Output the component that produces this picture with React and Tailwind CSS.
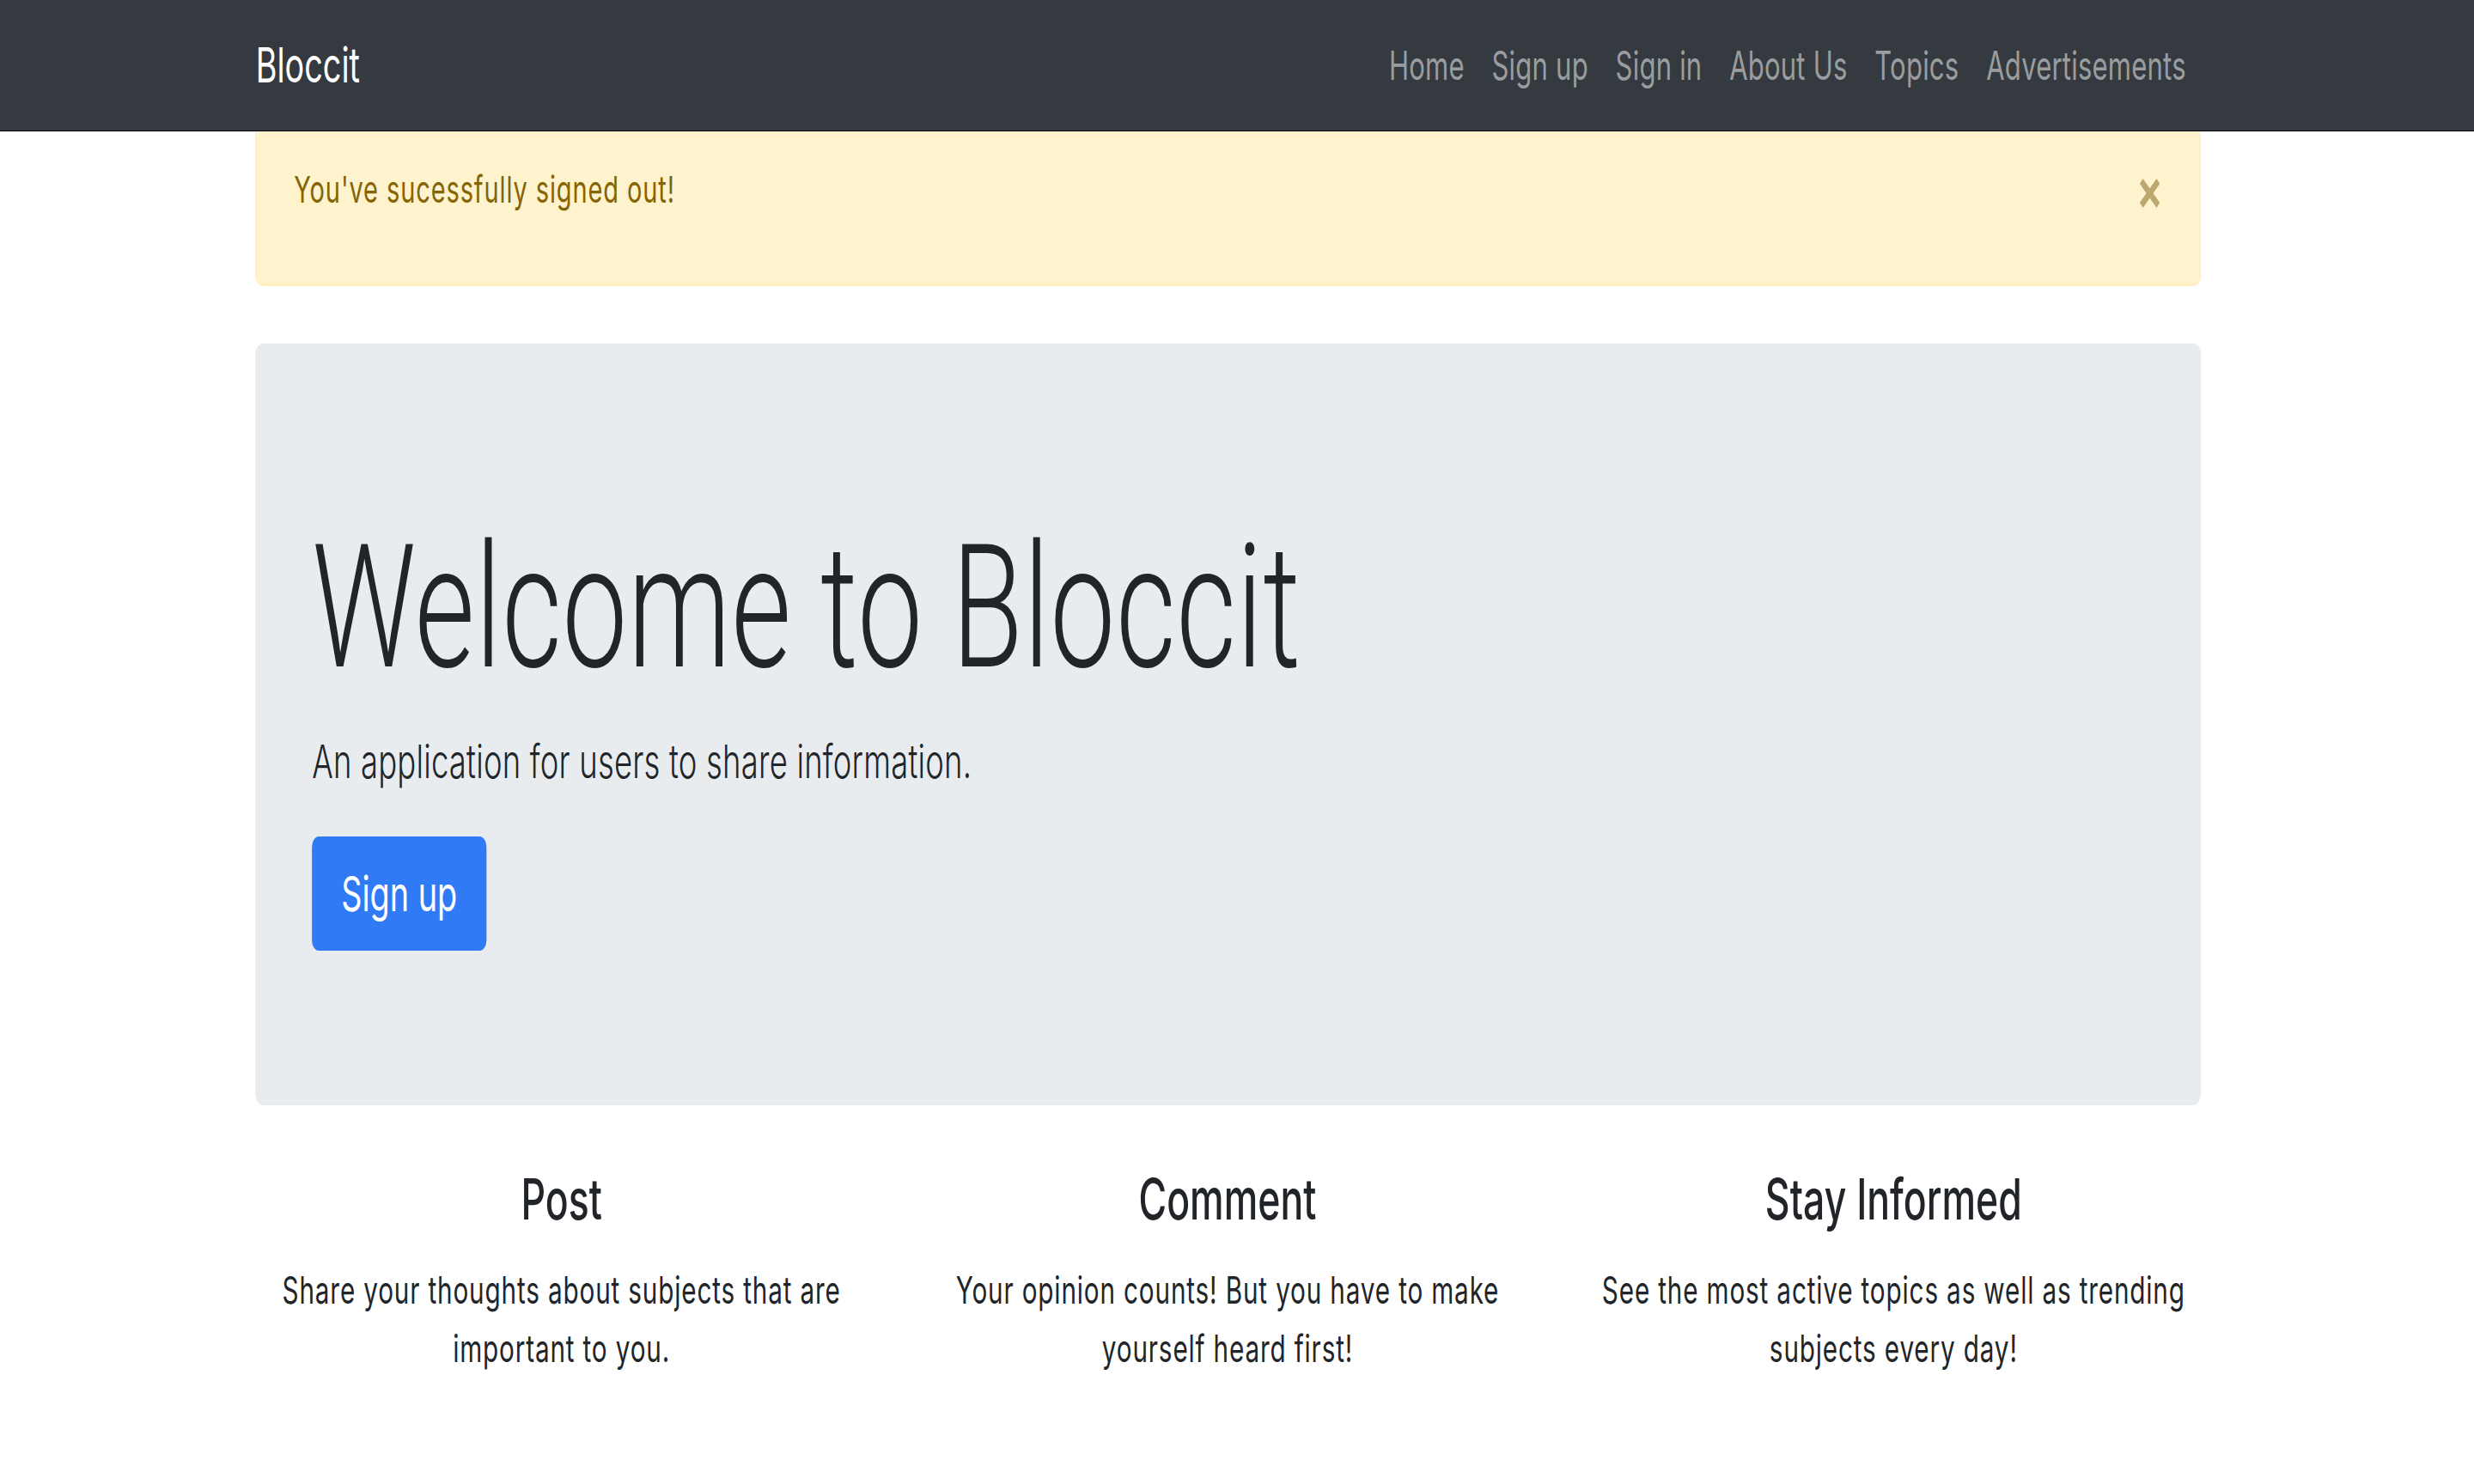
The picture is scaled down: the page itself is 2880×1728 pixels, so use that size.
const links = ["Home", "Sign up", "Sign in", "About Us", "Topics", "Advertisements"];

const features = [
  { title: "Post", lines: ["Share your thoughts about subjects that are", "important to you."] },
  { title: "Comment", lines: ["Your opinion counts! But you have to make", "yourself heard first!"] },
  { title: "Stay Informed", lines: ["See the most active topics as well as trending", "subjects every day!"] },
];

function Navbar() {
  return (
    <nav className="h-[153px] bg-[#343a40] border-b border-black">
      <div className="ml-[440px] w-[3356px] h-full flex items-center justify-between">
        <a className="ml-[1px] text-[56px] leading-none text-white">Bloccit</a>
        <ul className="flex items-center gap-[47px] pr-[26px]">
          {links.map((link) => (
            <li key={link} className="text-[46px] leading-none text-[#9a9d9f] tracking-[0.3px]">
              {link}
            </li>
          ))}
        </ul>
      </div>
    </nav>
  );
}

function Alert() {
  return (
    <div className="h-[180px] bg-[#fff3cd] border-2 border-t-0 border-[#ffeeba] rounded-b-[14px] flex justify-between pl-[65px] pr-[68px]">
      <p className="mt-[46px] text-[43px] leading-none tracking-[1.3px] text-[#856404]">You've sucessfully signed out!</p>
      <svg className="mt-[55px] w-[37px] h-[34px] text-[#bba86f]" viewBox="0 0 37 34" fill="none">
        <path d="M4 3 L33 31 M33 3 L4 31" stroke="currentColor" strokeWidth="8" />
      </svg>
    </div>
  );
}

function Jumbotron() {
  return (
    <div className="mt-[67px] h-[887px] bg-[#e9ecef] rounded-[14px] pl-[98px] pt-[208px] flex flex-col items-start">
      <h1 className="font-['Roboto',sans-serif] font-light text-[200px] leading-none tracking-[1px] text-[#212529]">
        Welcome to Bloccit
      </h1>
      <p className="mt-[52px] font-light text-[54px] leading-none tracking-[0.3px] text-[#212529]">
        An application for users to share information.
      </p>
      <a className="mt-[60px] w-[301px] h-[133px] rounded-[12px] bg-[#307af5] flex items-center justify-center text-[56px] leading-none text-white">
        Sign up
      </a>
    </div>
  );
}

function Features() {
  return (
    <div className="ml-[394px] w-[3446px] grid grid-cols-3 pt-[76px]">
      {features.map((f) => (
        <div key={f.title} className="px-[46px] text-center text-[#212529]">
          <h2 className="text-[66px] leading-none font-medium">{f.title}</h2>
          <p className="mt-[39px] text-[44px] leading-[68px] tracking-[1.25px]">
            {f.lines[0]}
            <br />
            {f.lines[1]}
          </p>
        </div>
      ))}
    </div>
  );
}

export default function App() {
  return (
    <div className="w-full min-h-screen overflow-hidden bg-white font-['Inter','Liberation_Sans',sans-serif]">
      <div className="w-[4267px] origin-top-left scale-x-[0.675]">
        <Navbar />
        <div className="ml-[440px] w-[3356px]">
          <Alert />
          <Jumbotron />
        </div>
        <Features />
      </div>
    </div>
  );
}
